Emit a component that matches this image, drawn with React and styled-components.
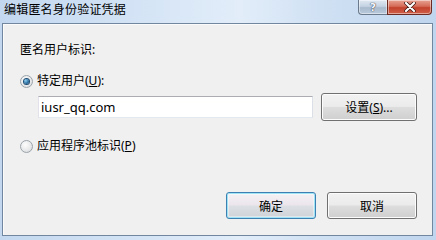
import React from "react";
import styled, { createGlobalStyle, css } from "styled-components";

const Global = createGlobalStyle`
  html, body { margin: 0; padding: 0; background: #c9dcf1; }
  body { font-family: "Noto Sans", "Noto Sans CJK SC", sans-serif; }
`;

const FONT = `"Noto Sans", "Noto Sans CJK SC", sans-serif`;

const Window = styled.div`
  width: 436px;
  height: 240px;
  display: flex;
  flex-direction: column;
  background: linear-gradient(90deg, #c3d8ef 0%, #d3e3f5 30%, #e2edf9 55%, #cfe0f3 75%, #c0d6ee 100%);
  overflow: hidden;
  font-family: ${FONT};
`;

const TitleBar = styled.div`
  height: 23px;
  flex: none;
  display: flex;
  align-items: flex-start;
  justify-content: space-between;
  padding: 0 4px 0 4px;
`;

const Title = styled.div`
  font-size: 12px;
  line-height: 14px;
  padding-top: 3px;
  color: #000;
  letter-spacing: 0.2px;
`;

const Caption = styled.div`
  display: flex;
`;

const CapButton = styled.div`
  height: 15px;
  width: ${(p) => p.$w}px;
  display: flex;
  align-items: center;
  justify-content: center;
  box-sizing: border-box;
  border: 1px solid ${(p) => (p.$close ? "#6d2a22" : "#6b7a8c")};
  border-top: none;
  ${(p) => p.$left && css`border-radius: 0 0 0 4px; border-right: none;`}
  ${(p) => p.$right && css`border-radius: 0 0 4px 0;`}
  background: ${(p) =>
    p.$close
      ? "linear-gradient(180deg, #e8a393 0%, #d56b58 45%, #c2412c 55%, #d0604a 100%)"
      : "linear-gradient(180deg, #dfe8f2 0%, #c4d2e2 45%, #a9bace 55%, #b9cadc 100%)"};
  box-shadow: inset 0 0 0 1px rgba(255, 255, 255, 0.45);
  color: #f4f7fb;
  font-family: "DejaVu Sans", sans-serif;
  font-size: 11px;
  font-weight: bold;
  line-height: 13px;
  text-shadow: 0 0 1px #334, 0 0 1px #334;
`;

const Client = styled.div`
  flex: 1;
  margin: 0 3px 4px 2px;
  border: 1px solid #71879f;
  background: #f0f0f0;
  box-shadow: inset 1px 1px 0 #fbfbfb;
  display: flex;
  flex-direction: column;
  padding: 0 15px 16px 17px;
  font-size: 12px;
  color: #000;
`;

const GroupLabel = styled.div`
  margin-top: 19px;
  line-height: 14px;
  height: 14px;
`;

const RadioRow = styled.label`
  display: flex;
  align-items: center;
  height: 14px;
  line-height: 14px;
  margin-top: ${(p) => p.$mt}px;
  gap: 4px;
`;

const Radio = styled.span`
  width: 13px;
  height: 13px;
  box-sizing: border-box;
  border-radius: 50%;
  border: 1px solid #9aa3ab;
  background: radial-gradient(circle at 40% 35%, #fdfdfd 0%, #e6e7e8 60%, #cfd1d3 100%);
  display: flex;
  align-items: center;
  justify-content: center;
  flex: none;
  &::after {
    content: "";
    display: ${(p) => (p.$checked ? "block" : "none")};
    width: 5px;
    height: 5px;
    border-radius: 50%;
    background: radial-gradient(circle at 35% 35%, #8bd0f0 0%, #2b6fa3 55%, #173e63 100%);
    box-shadow: 0 0 0 1px #1d4c74;
  }
`;

const U = styled.span`
  text-decoration: underline;
  text-underline-offset: 1px;
`;

const InputRow = styled.div`
  display: flex;
  align-items: center;
  margin-top: 5px;
  margin-left: 18px;
  gap: 8px;
`;

const TextBox = styled.div`
  width: 275px;
  height: 22px;
  box-sizing: border-box;
  border: 1px solid;
  border-color: #abadb3 #dbdfe6 #e3e9ef #e2e3ea;
  background: #fff;
  padding-left: 2px;
  display: flex;
  align-items: center;
  font-size: 13px;
  color: #000;
`;

const Button = styled.div`
  width: ${(p) => p.$w}px;
  height: ${(p) => p.$h}px;
  box-sizing: border-box;
  border: 1px solid ${(p) => (p.$default ? "#3c7fb1" : "#707070")};
  border-radius: 3px;
  background: ${(p) =>
    p.$default
      ? "linear-gradient(180deg, #f4f1f4 0%, #ece6ec 48%, #dcdfe3 52%, #cfd3d8 100%)"
      : "linear-gradient(180deg, #f2f2f2 0%, #ebebeb 48%, #dddddd 52%, #cfcfcf 100%)"};
  box-shadow: ${(p) =>
    p.$default
      ? "inset 0 0 0 1px #9fe3f7, inset 0 0 0 2px rgba(255,255,255,0.4)"
      : "inset 0 0 0 1px #fcfcfc"};
  display: flex;
  align-items: center;
  justify-content: center;
  font-size: 12px;
  color: #000;
`;

const Footer = styled.div`
  margin-top: auto;
  display: flex;
  justify-content: flex-end;
  gap: 11px;
`;

export default function App() {
  return (
    <>
      <Global />
      <Window>
        <TitleBar>
          <Title>编辑匿名身份验证凭据</Title>
          <Caption>
            <CapButton $w={29} $left>?</CapButton>
            <CapButton $w={45} $close $right>
              <svg width="12" height="10" viewBox="0 0 12 10">
                <path d="M2 1 L10 9 M10 1 L2 9" stroke="#3a1410" strokeWidth="3.6" strokeLinecap="round" />
                <path d="M2 1 L10 9 M10 1 L2 9" stroke="#ffffff" strokeWidth="2.2" strokeLinecap="round" />
              </svg>
            </CapButton>
          </Caption>
        </TitleBar>
        <Client>
          <GroupLabel>匿名用户标识:</GroupLabel>
          <RadioRow $mt={17}>
            <Radio $checked />
            <span>特定用户(<U>U</U>):</span>
          </RadioRow>
          <InputRow>
            <TextBox>iusr_qq.com</TextBox>
            <Button $w={96} $h={28}>设置(<U>S</U>)...</Button>
          </InputRow>
          <RadioRow $mt={18}>
            <Radio />
            <span>应用程序池标识(<U>P</U>)</span>
          </RadioRow>
          <Footer>
            <Button $w={90} $h={27} $default>确定</Button>
            <Button $w={90} $h={27}>取消</Button>
          </Footer>
        </Client>
      </Window>
    </>
  );
}
